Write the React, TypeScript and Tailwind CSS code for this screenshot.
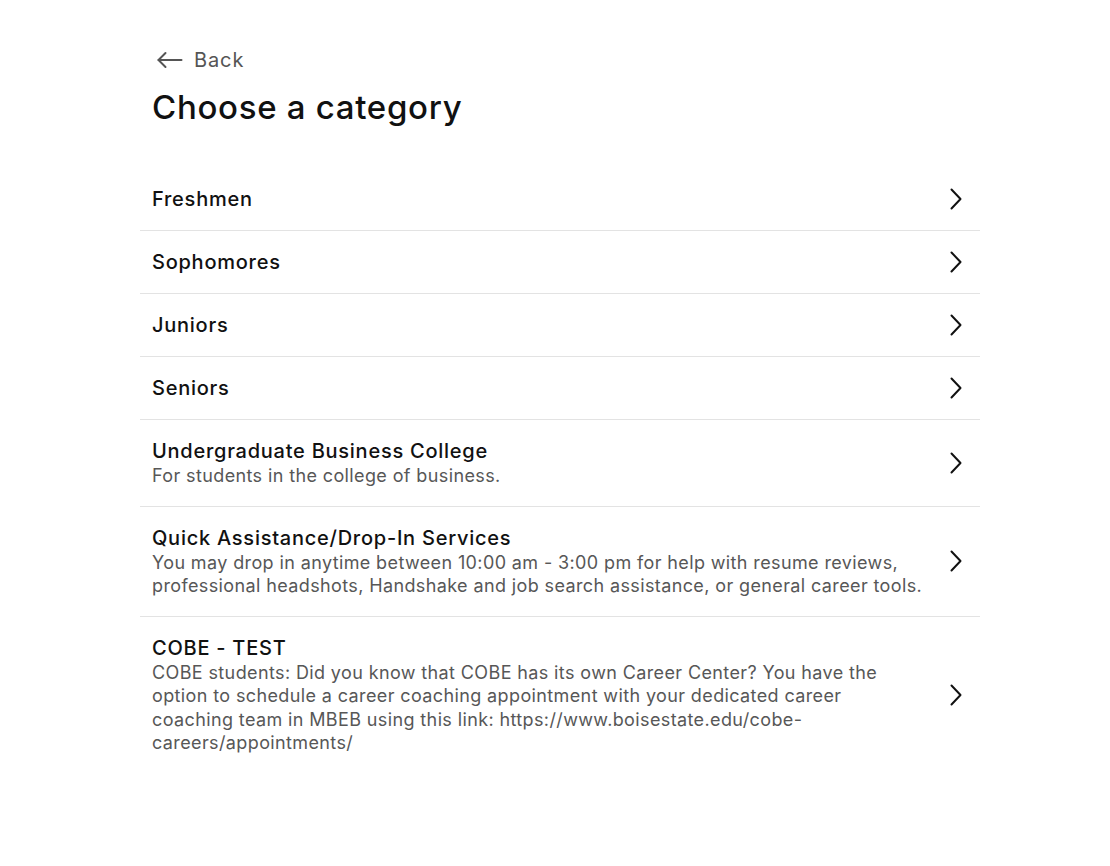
type Category = {
  title: string;
  description?: string;
};

const categories: Category[] = [
  { title: "Freshmen" },
  { title: "Sophomores" },
  { title: "Juniors" },
  { title: "Seniors" },
  {
    title: "Undergraduate Business College",
    description: "For students in the college of business.",
  },
  {
    title: "Quick Assistance/Drop-In Services",
    description:
      "You may drop in anytime between 10:00 am - 3:00 pm for help with resume reviews, professional headshots, Handshake and job search assistance, or general career tools.",
  },
  {
    title: "COBE - TEST",
    description:
      "COBE students: Did you know that COBE has its own Career Center? You have the option to schedule a career coaching appointment with your dedicated career coaching team in MBEB using this link: https://www.boisestate.edu/cobe-careers/appointments/",
  },
];

function Chevron() {
  return (
    <svg
      width="14"
      height="22"
      viewBox="0 0 14 22"
      fill="none"
      stroke="#111"
      strokeWidth="2"
      strokeLinecap="round"
      strokeLinejoin="round"
      className="shrink-0"
    >
      <path d="M2.5 1.5 L11.5 11 L2.5 20.5" />
    </svg>
  );
}

function BackArrow() {
  return (
    <svg
      width="26"
      height="18"
      viewBox="0 0 26 18"
      fill="none"
      stroke="#555"
      strokeWidth="2"
      strokeLinecap="round"
      strokeLinejoin="round"
    >
      <path d="M1.5 9 H24.5" />
      <path d="M8.5 2 L1.5 9 L8.5 16" />
    </svg>
  );
}

export default function App() {
  return (
    <div
      className="min-h-screen bg-white"
      style={{ fontFamily: "Inter, 'Liberation Sans', sans-serif" }}
    >
      <div className="ml-[140px] w-[840px] pt-[45px]">
        <button
          type="button"
          className="ml-[17px] flex items-center gap-[11px] text-[20px] leading-[30px] tracking-[0.9px] text-[#555]"
        >
          <BackArrow />
          Back
        </button>
        <h1 className="ml-3 mt-[10px] text-[33px] font-medium leading-[44px] tracking-[0.7px] text-[#111]">
          Choose a category
        </h1>

        <ul className="mt-[39px]">
          {categories.map((c) => (
            <li
              key={c.title}
              className="flex items-center gap-4 border-b border-[#e3e3e3] pb-[18px] pl-3 pr-[17px] pt-[18px] last:border-b-0"
            >
              <div className="min-w-0 flex-1">
                <p className="text-[20px] font-medium leading-[26px] tracking-[0.75px] text-[#111]">
                  {c.title}
                </p>
                {c.description ? (
                  <p className="pr-[7px] text-[18px] leading-[23.5px] tracking-[0.38px] text-[#575757]">
                    {c.description}
                  </p>
                ) : null}
              </div>
              <Chevron />
            </li>
          ))}
        </ul>
      </div>
    </div>
  );
}
